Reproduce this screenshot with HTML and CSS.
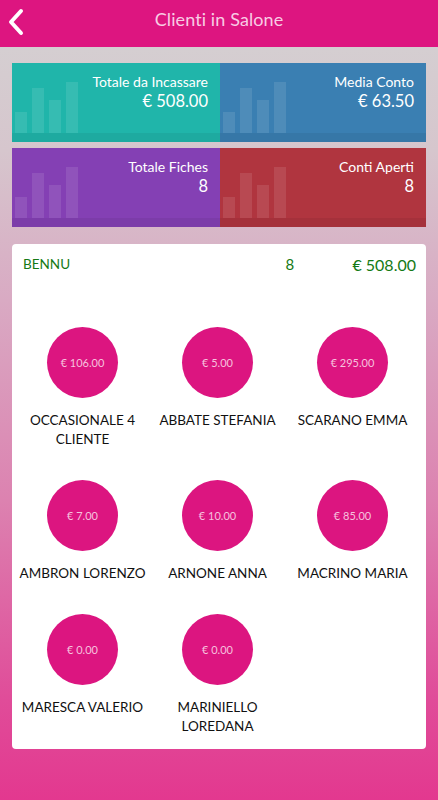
FILE: index.html
```html
<!DOCTYPE html>
<html lang="it">
<head>
<meta charset="utf-8">
<title>Clienti in Salone</title>
<link rel="stylesheet" href="styles.css">
</head>
<body>
<div class="page">
  <header class="topbar">
    <a class="back" href="#" aria-label="Indietro">
      <svg width="20" height="28" viewBox="0 0 20 28"><path d="M15 3 L5 14 L15 25" fill="none" stroke="#fff" stroke-width="4" stroke-linecap="round" stroke-linejoin="round"/></svg>
    </a>
    <h1 class="title">Clienti in Salone</h1>
  </header>

  <section class="tiles">
    <div class="tile teal">
      <div class="bars"><span class="b1"></span><span class="b2"></span><span class="b3"></span><span class="b4"></span></div>
      <div class="tile-text"><div class="tile-label">Totale da Incassare</div><div class="tile-value">€ 508.00</div></div>
    </div>
    <div class="tile blue">
      <div class="bars"><span class="b1"></span><span class="b2"></span><span class="b3"></span><span class="b4"></span></div>
      <div class="tile-text"><div class="tile-label">Media Conto</div><div class="tile-value">€ 63.50</div></div>
    </div>
    <div class="tile purple">
      <div class="bars"><span class="b1"></span><span class="b2"></span><span class="b3"></span><span class="b4"></span></div>
      <div class="tile-text"><div class="tile-label">Totale Fiches</div><div class="tile-value">8</div></div>
    </div>
    <div class="tile red">
      <div class="bars"><span class="b1"></span><span class="b2"></span><span class="b3"></span><span class="b4"></span></div>
      <div class="tile-text"><div class="tile-label">Conti Aperti</div><div class="tile-value">8</div></div>
    </div>
  </section>

  <section class="card">
    <div class="card-head">
      <span class="op">BENNU</span>
      <span class="count">8</span>
      <span class="total">€ 508.00</span>
    </div>
    <div class="clients">
      <div class="client"><div class="bubble">€ 106.00</div><div class="name">OCCASIONALE 4 CLIENTE</div></div>
      <div class="client"><div class="bubble">€ 5.00</div><div class="name">ABBATE STEFANIA</div></div>
      <div class="client"><div class="bubble">€ 295.00</div><div class="name">SCARANO EMMA</div></div>
      <div class="client"><div class="bubble">€ 7.00</div><div class="name">AMBRON LORENZO</div></div>
      <div class="client"><div class="bubble">€ 10.00</div><div class="name">ARNONE ANNA</div></div>
      <div class="client"><div class="bubble">€ 85.00</div><div class="name">MACRINO MARIA</div></div>
      <div class="client"><div class="bubble">€ 0.00</div><div class="name">MARESCA VALERIO</div></div>
      <div class="client"><div class="bubble">€ 0.00</div><div class="name">MARINIELLO LOREDANA</div></div>
    </div>
  </section>
</div>
</body>
</html>
```

FILE: styles.css
```css
* { box-sizing: border-box; }
html, body { margin: 0; padding: 0; }
body {
  font-family: "Lato", "Open Sans", sans-serif;
  width: 438px;
  min-height: 800px;
  background: linear-gradient(180deg, #d4d2d3 0px, #d6c6cd 150px, #d9aac3 300px, #dc82b0 500px, #e04c99 700px, #e3388f 800px);
}
.page { min-height: 800px; padding-bottom: 52px; }

.topbar {
  height: 47px;
  background: #dd1580;
  display: flex;
  align-items: center;
  justify-content: center;
  position: relative;
}
.back {
  position: absolute;
  left: 6px;
  top: 8px;
  display: block;
  width: 20px;
  height: 28px;
}
.back svg { display: block; }
.title {
  margin: 0;
  margin-top: -9px;
  font-weight: 400;
  font-size: 18px;
  color: #f8cce4;
  letter-spacing: 0.1px;
}

.tiles {
  margin: 16px 12px 0;
  display: grid;
  grid-template-columns: 208px 206px;
  grid-template-rows: 79px 79px;
  row-gap: 6px;
}
.tile {
  position: relative;
  display: flex;
  justify-content: flex-end;
  overflow: hidden;
  box-shadow: inset 0 -9px 0 rgba(0,0,0,0.06);
}
.teal { background: #20b5aa; }
.blue { background: #3a7fb2; }
.purple { background: #8440b4; }
.red { background: #b0353f; }
.bars {
  position: absolute;
  left: 3px;
  bottom: 9px;
  display: flex;
  align-items: flex-end;
  gap: 5px;
}
.bars span { width: 12px; background: rgba(255,255,255,0.1); display: block; }
.b1 { height: 21px; }
.b2 { height: 45px; }
.b3 { height: 33px; }
.b4 { height: 51px; }
.tile-text {
  position: relative;
  text-align: right;
  padding: 10px 12px 0 0;
  color: #fff;
}
.tile-label { font-size: 14px; line-height: 18px; }
.tile-value { font-size: 16.5px; line-height: 20px; }

.card {
  margin: 17px 12px 0;
  background: #fff;
  border-radius: 4px;
  padding: 0 0 13px;
}
.card-head {
  display: flex;
  align-items: center;
  padding: 12px 10px 0 11px;
  height: 28px;
  color: #157a15;
  font-size: 13.5px;
}
.op { flex: 1; }
.count { width: 67px; font-size: 15px; }
.total { font-size: 16px; }

.clients {
  margin-top: 55px;
  padding: 0 3px;
  display: grid;
  grid-template-columns: repeat(3, 135px);
  row-gap: 31px;
}
.client {
  display: flex;
  flex-direction: column;
  align-items: center;
}
.bubble {
  width: 71px;
  height: 71px;
  border-radius: 50%;
  background: #dc1580;
  color: #f6c2de;
  font-size: 11px;
  display: flex;
  align-items: center;
  justify-content: center;
}
.name {
  margin-top: 13px;
  font-size: 13.5px;
  line-height: 19px;
  color: #111;
  text-align: center;
  padding: 0 4px;
}
```
